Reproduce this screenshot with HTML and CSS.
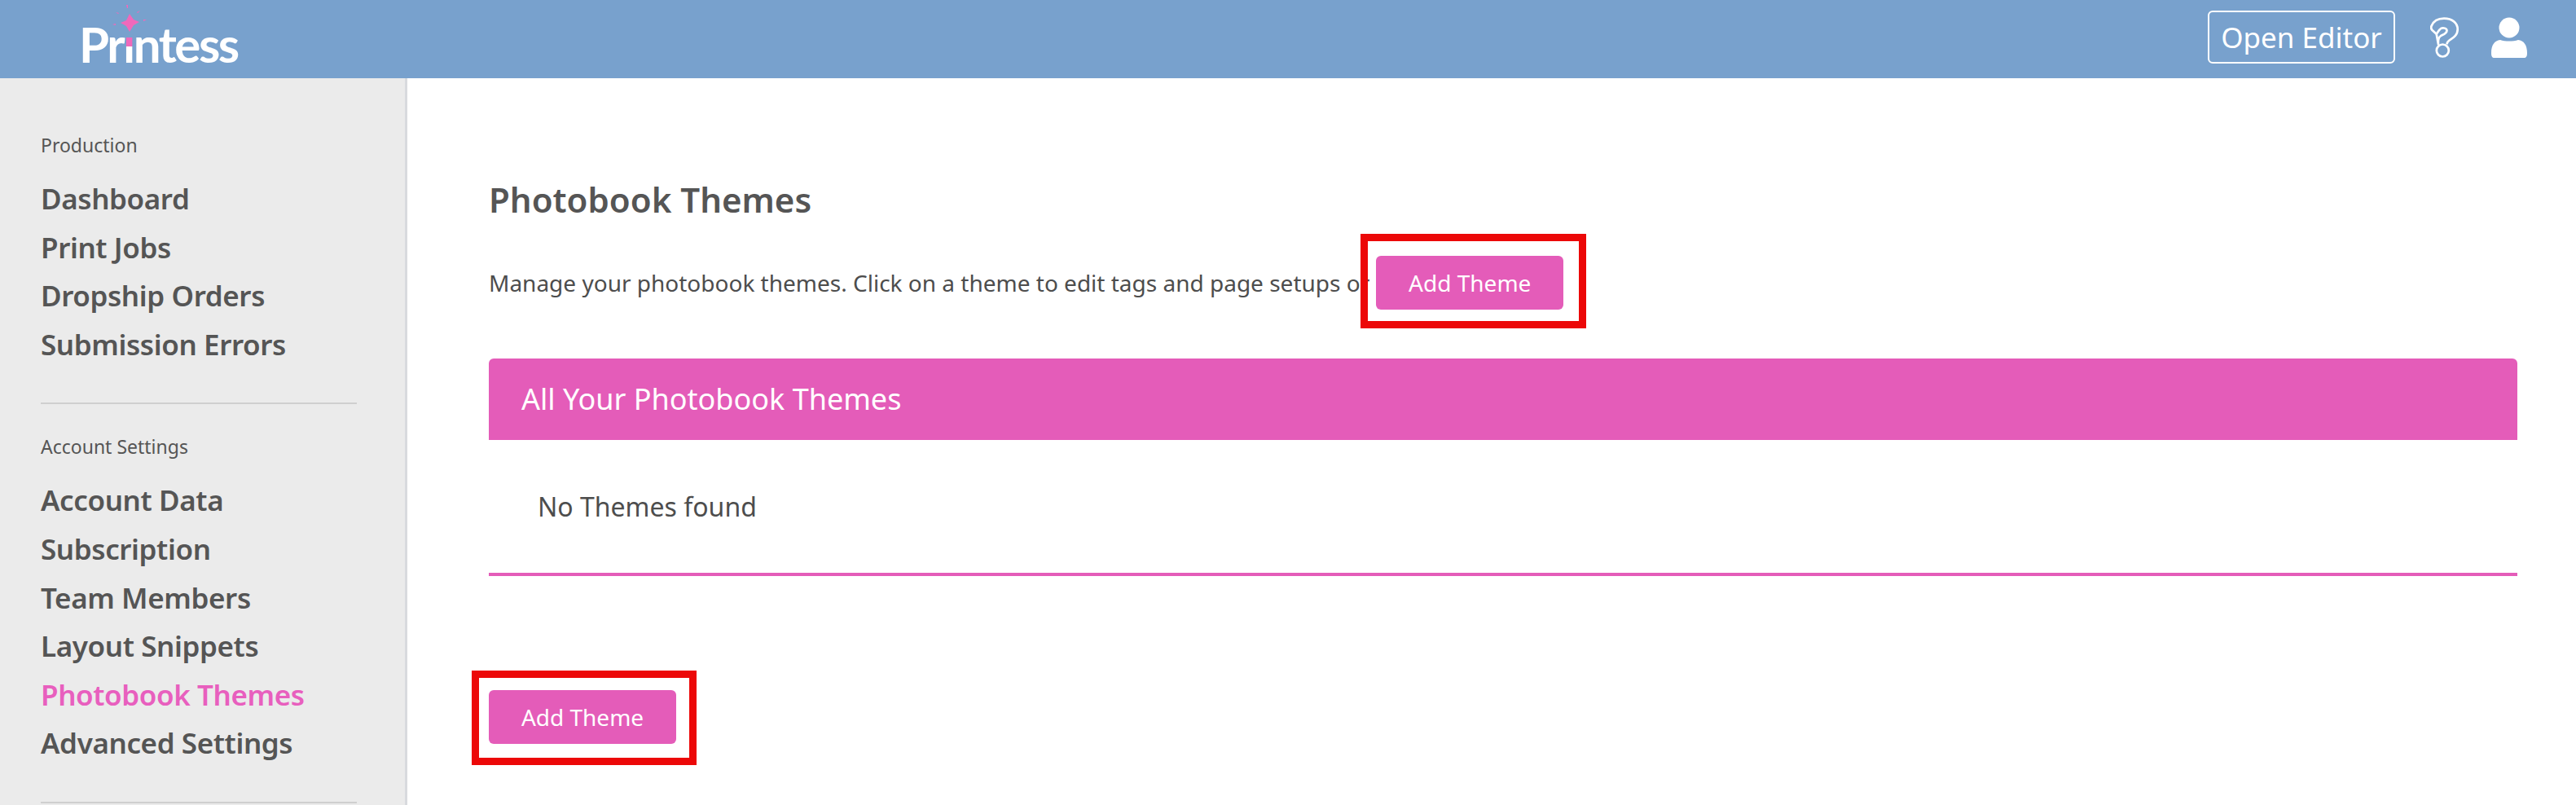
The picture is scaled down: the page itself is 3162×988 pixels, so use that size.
FILE: index.html
```html
<!DOCTYPE html>
<html lang="en">

<head>
    <meta charset="UTF-8">
    <meta name="viewport" content="width=device-width, initial-scale=1.0">
    <title>Photobook Themes</title>
    <link rel="stylesheet" href="styles.css">
</head>

<body>
    <header class="topbar">
        <a class="logo">
            <svg class="logo-star" viewBox="0 0 44 44">
                <path fill="#f069bb" d="M21 12 L26 19 L33 22 L26 26 L21 34 L17 27 L10 23 L17 20 Z" />
                <path fill="#f069bb" d="M17 1 L19 1 L19 5 L18 5 Z M4 10 L8 11 L7 12 Z M34 8 L31 11 L30 10 Z M38 19 L42 19 L38 21 Z M0 25 L4 24 L4 26 Z" />
            </svg>
            <span>Pr<span class="logo-i">ı</span>ntess</span>
        </a>
        <div class="topbar-right">
            <button class="open-editor">Open Editor</button>
            <svg class="icon-help" viewBox="0 0 36 50">
                <path fill="none" stroke="#fff" stroke-width="2.7" stroke-linejoin="round" d="M7.7 20.7 L2.5 16 Q0.5 14 1.5 11 C4 5 10 1.7 17 1.7 C27 1.7 33.7 7 33.7 15 C33.7 23 27 26 23.5 28.5 C21.5 30 20.5 31 20.5 33.5 M10 33.5 C9.5 28 10 25 13 23 C16 21.5 20.5 20 20.5 16.5 C20.5 13 14 12.5 12 15 C10 17 9 19 7.7 20.7 Z" />
                <circle cx="15.3" cy="41" r="7.5" fill="none" stroke="#fff" stroke-width="2.7" />
            </svg>
            <svg class="icon-user" viewBox="0 0 44 50">
                <circle cx="22" cy="13" r="12.5" fill="#fff" />
                <path fill="#fff" d="M0 44 C0 34 4 29 11 28 C17 30 27 30 33 28 C40 29 44 34 44 44 C44 48 43 50 40 50 L4 50 C1 50 0 48 0 44 Z" />
            </svg>
        </div>
    </header>

    <div class="layout">
        <nav class="sidebar">
            <div class="nav-label">Production</div>
            <a class="nav-item">Dashboard</a>
            <a class="nav-item">Print Jobs</a>
            <a class="nav-item">Dropship Orders</a>
            <a class="nav-item">Submission Errors</a>
            <hr class="nav-divider">
            <div class="nav-label">Account Settings</div>
            <a class="nav-item">Account Data</a>
            <a class="nav-item">Subscription</a>
            <a class="nav-item">Team Members</a>
            <a class="nav-item">Layout Snippets</a>
            <a class="nav-item active">Photobook Themes</a>
            <a class="nav-item">Advanced Settings</a>
            <hr class="nav-divider">
        </nav>

        <main class="content">
            <h1>Photobook Themes</h1>
            <div class="intro">
                <span>Manage your photobook themes. Click on a theme to edit tags and page setups or</span>
                <button class="btn marked-top">Add Theme</button>
            </div>
            <section class="panel">
                <h2>All Your Photobook Themes</h2>
                <p>No Themes found</p>
            </section>
            <button class="btn marked-bottom">Add Theme</button>
        </main>
    </div>
</body>

</html>
```

FILE: styles.css
```css
html,
body {
    height: 100%;
    margin: 0;
    overflow: hidden;
}

body {
    background-color: #fff;
    color: #555;
    font-family: 'Noto Sans', sans-serif;
    display: flex;
    flex-direction: column;
}

.topbar {
    height: 96px;
    box-sizing: border-box;
    flex-shrink: 0;
    background-color: #78a1cd;
    display: flex;
    align-items: center;
    justify-content: space-between;
    padding: 0 60px 5px 97px;
}

.logo {
    position: relative;
    align-self: flex-start;
    color: #fff;
    font-family: 'Lato', sans-serif;
    font-size: 60px;
    font-weight: 700;
    letter-spacing: -2.5px;
    line-height: 96px;
    padding-top: 6px;
    height: 90px;
}

.logo-i {
    background: linear-gradient(#f069bb 0, #f069bb 54%, #fff 54%);
    -webkit-background-clip: text;
    background-clip: text;
    color: transparent;
}

.logo-star {
    position: absolute;
    left: 41px;
    top: 5px;
    width: 44px;
    height: 44px;
}

.topbar-right {
    display: flex;
    align-items: center;
}

.open-editor {
    width: 230px;
    height: 65px;
    margin-right: 43px;
    padding: 0;
    background: none;
    border: 2px solid #fff;
    border-radius: 6px;
    color: #fff;
    font-family: inherit;
    font-size: 35px;
}

.icon-help {
    width: 36px;
    height: 50px;
    margin-right: 39px;
}

.icon-user {
    width: 44px;
    height: 50px;
}

.layout {
    flex: 1;
    display: flex;
    min-height: 0;
}

.sidebar {
    width: 497px;
    flex-shrink: 0;
    background-color: #ebebeb;
    border-right: 3px solid #d8dade;
    padding-top: 64px;
    overflow: hidden;
}

.nav-label {
    margin: 0 0 18px 50px;
    font-size: 23px;
    line-height: 36px;
}

.nav-item {
    display: block;
    margin-left: 50px;
    font-size: 35px;
    font-weight: 600;
    letter-spacing: -0.4px;
    line-height: 59.6px;
}

.nav-item.active {
    color: #e85fbe;
}

.nav-divider {
    width: 388px;
    height: 2px;
    margin: 42px 0 34px 50px;
    border: none;
    background-color: #cfcfcf;
}

.content {
    flex: 1;
    padding: 120px 72px 0 100px;
}

h1 {
    margin: 0;
    font-size: 42px;
    font-weight: 600;
    line-height: 58px;
}

.intro {
    display: flex;
    align-items: center;
    margin-top: 40px;
    font-size: 28px;
    color: #4d4d4d;
}

.btn {
    position: relative;
    width: 230px;
    height: 66px;
    padding: 0;
    border: none;
    border-radius: 6px;
    background-color: #e45cb9;
    color: #fff;
    font-family: inherit;
    font-size: 28px;
}

.intro .btn {
    margin-left: 8px;
}

/* red annotation frames from the screenshot */
.marked-top::after,
.marked-bottom::after {
    content: "";
    position: absolute;
    border: 9px solid #ec0808;
}

.marked-top::after {
    inset: -27px -28px -23px -19px;
}

.marked-bottom::after {
    inset: -24px -25px -26px -21px;
}

.panel {
    margin: 60px 0 140px;
    border-bottom: 4px solid #e45cb9;
}

.panel h2 {
    margin: 0;
    height: 100px;
    padding-left: 40px;
    border-radius: 6px 6px 0 0;
    background-color: #e45cb9;
    color: #fff;
    font-size: 36px;
    font-weight: 400;
    line-height: 100px;
}

.panel p {
    margin: 0;
    padding: 60px 60px 59px;
    font-size: 32px;
    line-height: 44px;
    color: #4d4d4d;
}
```
